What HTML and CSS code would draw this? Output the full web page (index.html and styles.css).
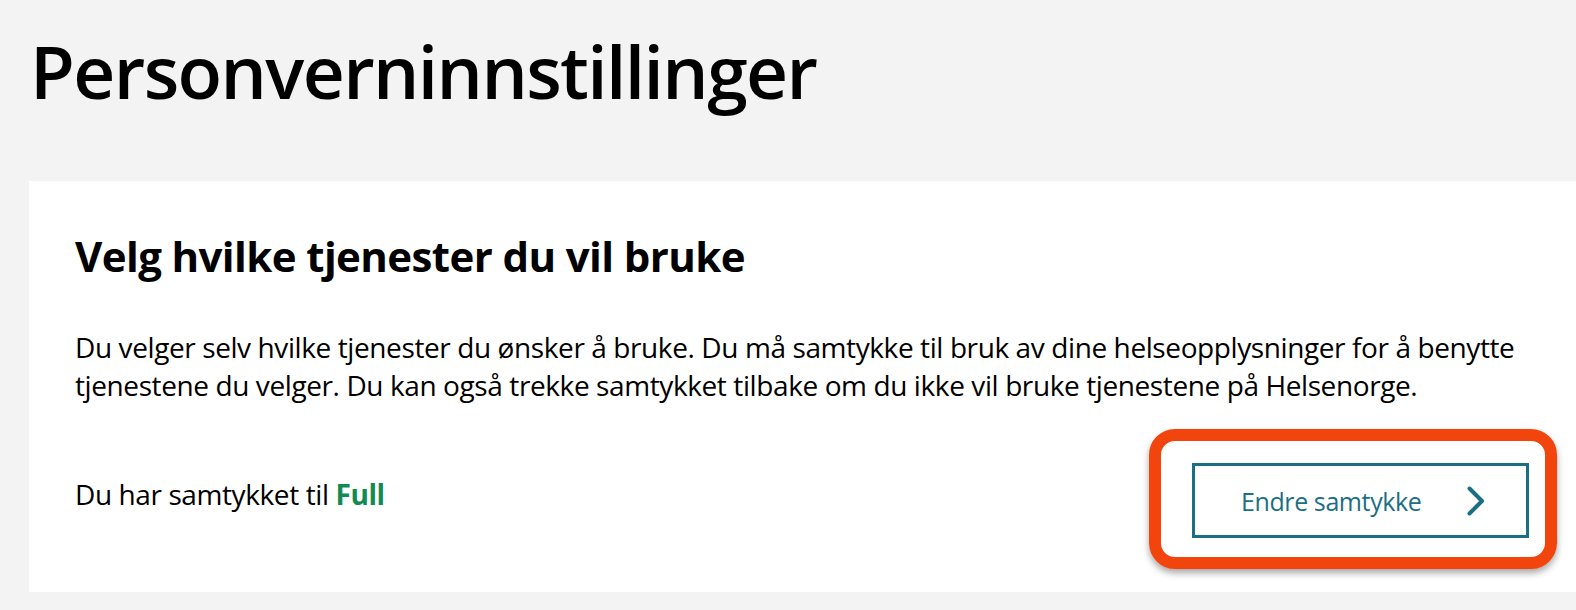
FILE: index.html
```html
<!DOCTYPE html>
<html lang="no">
<head>
    <meta charset="UTF-8">
    <meta name="viewport" content="width=device-width, initial-scale=1.0">
    <title>Personverninnstillinger</title>
    <link rel="stylesheet" href="styles.css">
</head>
<body>
    <h1 class="page-title">Personverninnstillinger</h1>

    <section class="consent-card">
        <h2>Velg hvilke tjenester du vil bruke</h2>
        <p class="intro">
            Du velger selv hvilke tjenester du ønsker å bruke. Du må samtykke til bruk av dine helseopplysninger for å benytte
            tjenestene du velger. Du kan også trekke samtykket tilbake om du ikke vil bruke tjenestene på Helsenorge.
        </p>
        <div class="consent-footer">
            <span class="consent-status">Du har samtykket til <strong>Full</strong></span>
            <div class="highlight">
                <button type="button" class="change-button">
                    <span>Endre samtykke</span>
                    <svg class="chevron" width="20" height="32" viewBox="0 0 20 32" aria-hidden="true">
                        <path d="M3.5 3.5 L16 16 L3.5 28.5" fill="none" stroke="currentColor" stroke-width="4" stroke-linecap="round" stroke-linejoin="round"/>
                    </svg>
                </button>
            </div>
        </div>
    </section>
</body>
</html>
```

FILE: styles.css
```css
body {
    margin: 0;
    padding-top: 27px;
    background-color: #f4f3f3;
    font-family: "Open Sans", "Noto Sans", sans-serif;
    color: #000;
}
.page-title {
    margin: 0 0 0 30px;
    font-size: 73px;
    line-height: 88px;
    font-weight: 600;
    letter-spacing: -1.6px;
}
.consent-card {
    margin: 66px 0 0 29px;
    padding: 49px 47px 54px 46px;
    background: white;
    letter-spacing: -0.4px;
}
.consent-card h2 {
    margin: 0;
    font-size: 42px;
    line-height: 52px;
    font-weight: 700;
    letter-spacing: -0.6px;
}
.intro {
    margin: 46px 0 0;
    font-size: 28px;
    line-height: 38px;
}
.consent-footer {
    display: flex;
    justify-content: space-between;
    align-items: flex-start;
    margin-top: 59px;
}
.consent-status {
    margin-top: 12px;
    font-size: 28px;
    line-height: 38px;
}
.consent-status strong {
    color: #138a52;
}
.highlight {
    position: relative;
}
.highlight::after {
    content: "";
    position: absolute;
    top: -34px;
    left: -43px;
    right: -28px;
    bottom: -31px;
    border: 12px solid #f1450d;
    border-radius: 26px;
    box-shadow: 0 4px 7px rgba(0,0,0,0.35);
    pointer-events: none;
}
.change-button {
    display: flex;
    align-items: center;
    justify-content: space-between;
    box-sizing: border-box;
    width: 337px;
    height: 75px;
    padding: 0 40px 0 46px;
    background: white;
    border: 3px solid #1b6f84;
    color: #1b6f84;
    font-family: inherit;
    font-size: 25px;
    line-height: 1.2;
    letter-spacing: -0.4px;
    cursor: pointer;
}
.chevron {
    display: block;
}
```
